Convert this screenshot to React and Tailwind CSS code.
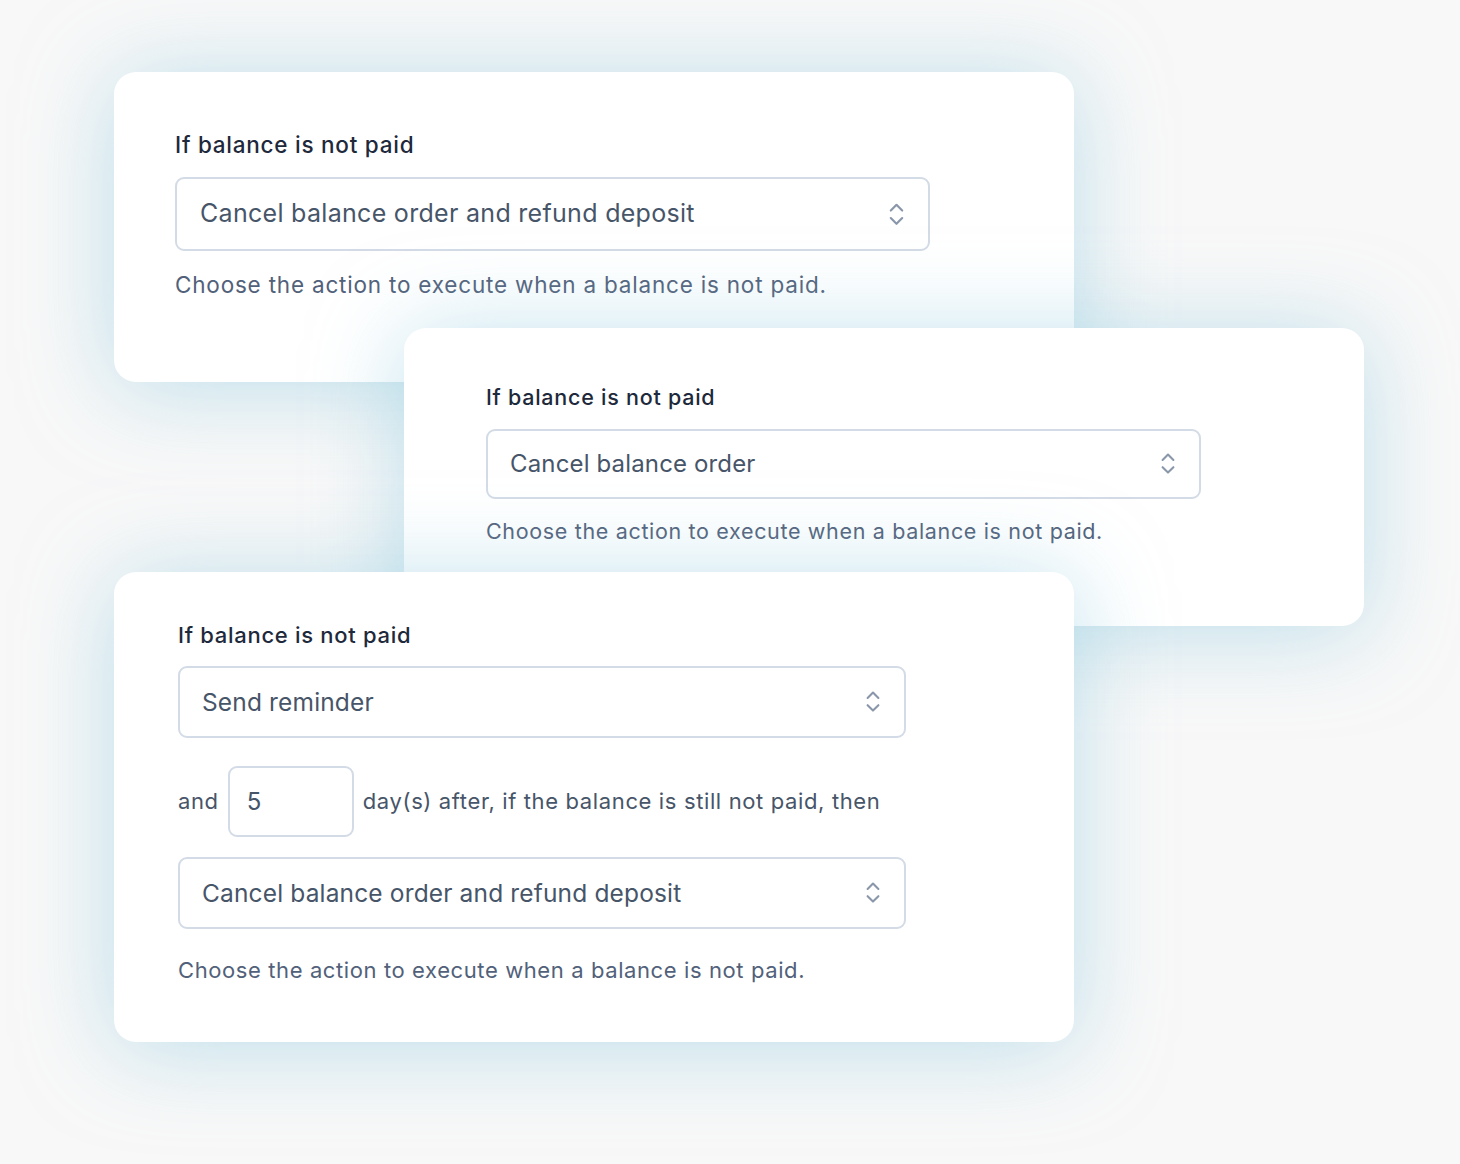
import React from "react";

const Chevrons = ({ size = 24 }) => (
  <svg width={size} height={size * 1.4} viewBox="0 0 20 28" fill="none" stroke="#8a97ab" strokeWidth="2.3" strokeLinecap="round" strokeLinejoin="round">
    <path d="M4 10 L10 4 L16 10" />
    <path d="M4 18 L10 24 L16 18" />
  </svg>
);

const Select = ({ text, className, textClass, iconSize }) => (
  <div className={`flex items-center justify-between rounded-[9px] border-2 border-[#d3dbe6] bg-white ${className}`}>
    <span className={`text-[#475569] ${textClass}`}>{text}</span>
    <Chevrons size={iconSize} />
  </div>
);

const cardShadow = "shadow-[0_6px_90px_rgba(150,205,225,0.6)]";

export default function App() {
  return (
    <div className="relative w-[1460px] h-[1164px] overflow-hidden bg-[#f8f8f8]" style={{ fontFamily: "Inter, 'Noto Sans', sans-serif" }}>
      {/* Card 1 */}
      <div className={`absolute left-[114px] top-[72px] w-[960px] h-[310px] rounded-[22px] bg-white ${cardShadow} pl-[61px] pt-[58px]`}>
        <div className="text-[22.5px] font-medium text-[#1e293b] leading-[30px] tracking-[0.75px]">If balance is not paid</div>
        <Select
          text="Cancel balance order and refund deposit"
          className="mt-[17px] w-[755px] h-[74px] pl-[23px] pr-[22px]"
          textClass="text-[25px] tracking-[0.3px]"
          iconSize={19}
        />
        <div className="mt-[19px] text-[22.5px] text-[#52617a] leading-[30px] tracking-[0.8px]">Choose the action to execute when a balance is not paid.</div>
      </div>

      {/* Card 2 */}
      <div className={`absolute left-[404px] top-[328px] w-[960px] h-[298px] rounded-[22px] bg-white ${cardShadow} pl-[82px] pt-[55px]`}>
        <div className="text-[21.5px] font-medium text-[#1e293b] leading-[28px] tracking-[0.75px]">If balance is not paid</div>
        <Select
          text="Cancel balance order"
          className="mt-[18px] w-[715px] h-[70px] pl-[22px] pr-[22px]"
          textClass="text-[24px] tracking-[0.15px]"
          iconSize={18}
        />
        <div className="mt-[17px] text-[21.5px] text-[#52617a] leading-[30px] tracking-[0.66px]">Choose the action to execute when a balance is not paid.</div>
      </div>

      {/* Card 3 */}
      <div className={`absolute left-[114px] top-[572px] w-[960px] h-[470px] rounded-[22px] bg-white ${cardShadow} pl-[64px] pt-[48px]`}>
        <div className="text-[22px] font-medium text-[#1e293b] leading-[30px] tracking-[0.7px]">If balance is not paid</div>
        <Select
          text="Send reminder"
          className="mt-[16px] w-[728px] h-[72px] pl-[22px] pr-[22px]"
          textClass="text-[24.5px] tracking-[0.15px]"
          iconSize={18}
        />
        <div className="mt-[28px] flex items-center gap-[9px] text-[22px] text-[#475569] tracking-[0.63px]">
          <span>and</span>
          <div className="flex h-[71px] w-[126px] items-center rounded-[9px] border-2 border-[#d3dbe6] pl-[17px] text-[24px]">5</div>
          <span>day(s) after, if the balance is still not paid, then</span>
        </div>
        <Select
          text="Cancel balance order and refund deposit"
          className="mt-[20px] w-[728px] h-[72px] pl-[22px] pr-[22px]"
          textClass="text-[24.5px] tracking-[0.15px]"
          iconSize={18}
        />
        <div className="mt-[26px] text-[22px] text-[#52617a] leading-[30px] tracking-[0.6px]">Choose the action to execute when a balance is not paid.</div>
      </div>
    </div>
  );
}
